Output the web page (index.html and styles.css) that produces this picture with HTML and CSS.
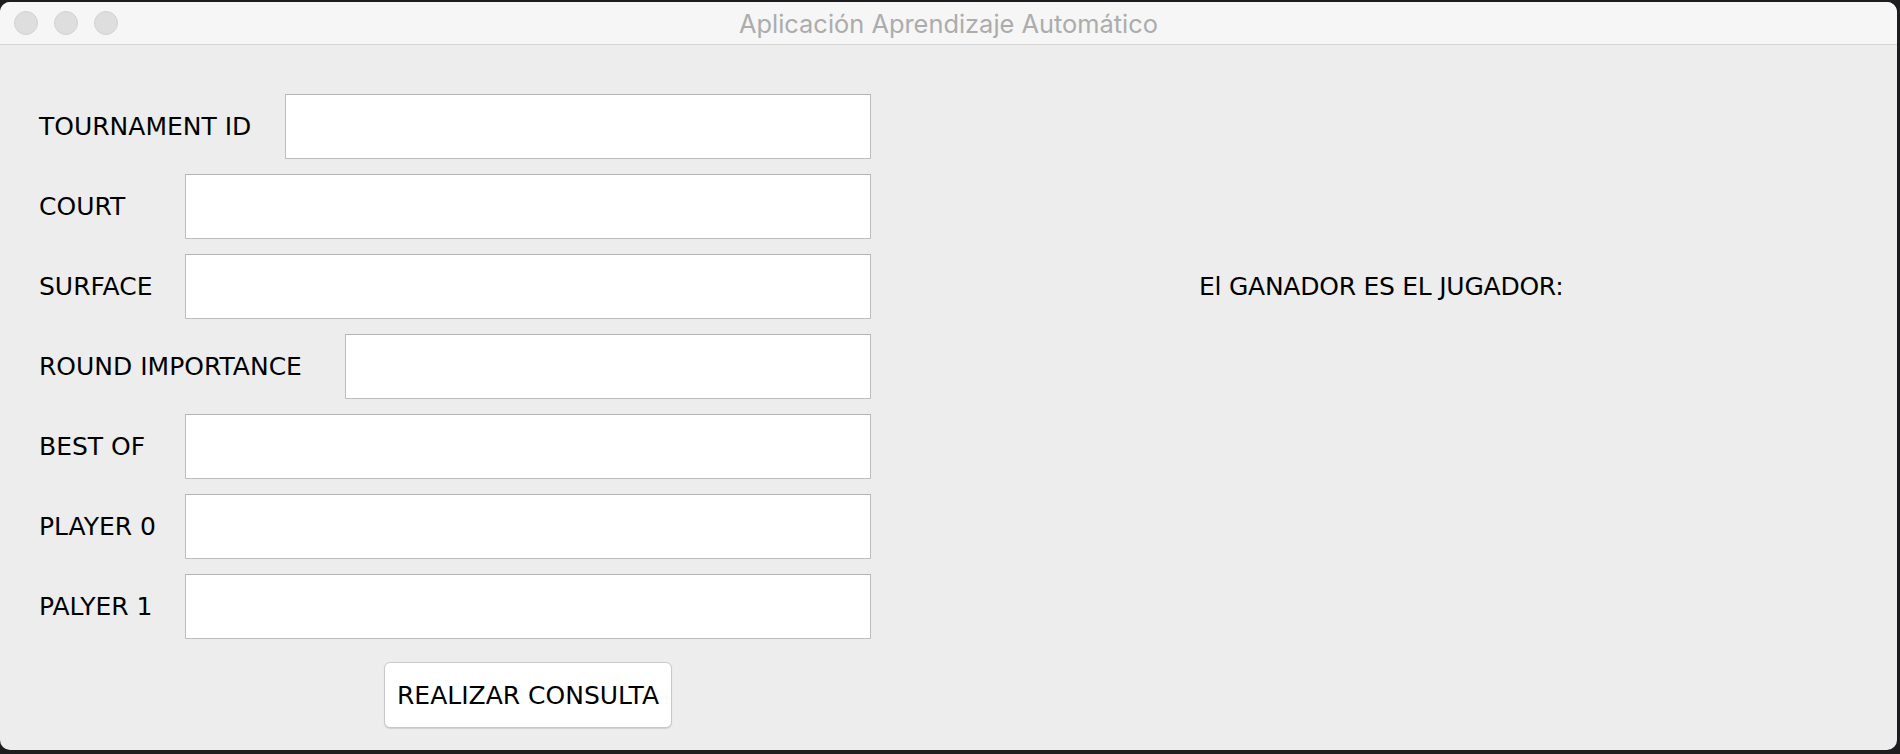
FILE: index.html
```html
<!DOCTYPE html>
<html lang="es">
<head>
<meta charset="utf-8">
<title>Aplicación Aprendizaje Automático</title>
<link rel="stylesheet" href="styles.css">
</head>
<body>
<div class="window">
  <div class="titlebar">
    <div class="lights">
      <span class="light"></span>
      <span class="light"></span>
      <span class="light"></span>
    </div>
    <div class="title">Aplicación Aprendizaje Automático</div>
  </div>
  <div class="content">
    <div class="form">
      <div class="row"><label class="lbl lbl-tid">TOURNAMENT ID</label><input class="field" type="text"></div>
      <div class="row"><label class="lbl">COURT</label><input class="field" type="text"></div>
      <div class="row"><label class="lbl">SURFACE</label><input class="field" type="text"></div>
      <div class="row"><label class="lbl lbl-round">ROUND IMPORTANCE</label><input class="field" type="text"></div>
      <div class="row"><label class="lbl">BEST OF</label><input class="field" type="text"></div>
      <div class="row"><label class="lbl">PLAYER 0</label><input class="field" type="text"></div>
      <div class="row"><label class="lbl">PALYER 1</label><input class="field" type="text"></div>
      <div class="actions"><button class="btn" type="button">REALIZAR CONSULTA</button></div>
    </div>
    <div class="result">
      <div class="result-line">El GANADOR ES EL JUGADOR:</div>
    </div>
  </div>
</div>
</body>
</html>
```
FILE: styles.css
```css
html, body {
  margin: 0;
  padding: 0;
}
body {
  background: #1d1d1f;
  width: 1900px;
  height: 754px;
  overflow: hidden;
}
.window {
  margin-top: 2px;
  width: 1897px;
  height: 748px;
  background: #ededed;
  border-radius: 10px;
  overflow: hidden;
  display: flex;
  flex-direction: column;
}
.titlebar {
  height: 42px;
  flex: none;
  background: #f6f6f6;
  border-bottom: 1px solid #d6d6d6;
  display: flex;
  align-items: center;
  position: relative;
}
.lights {
  display: flex;
  gap: 16px;
  padding-left: 14px;
}
.light {
  width: 22px;
  height: 22px;
  border-radius: 50%;
  background: #dedede;
  border: 1px solid #d2d2d2;
}
.title {
  position: absolute;
  left: 0;
  right: 0;
  top: 0;
  bottom: 0;
  display: flex;
  align-items: center;
  justify-content: center;
  font-family: Inter, "Liberation Sans", sans-serif;
  font-size: 25.4px;
  color: #acacac;
}
.content {
  flex: 1;
  display: flex;
  padding: 49px 0 0 39px;
  font-family: "DejaVu Sans", sans-serif;
  font-size: 25px;
  color: #000;
}
.form {
  width: 832px;
  display: flex;
  flex-direction: column;
  gap: 15px;
}
.row {
  display: flex;
  align-items: center;
  height: 65px;
}
.lbl {
  flex: none;
  width: 146px;
  white-space: nowrap;
}
.lbl-tid {
  width: 246px;
}
.lbl-round {
  width: 306px;
}
.field {
  flex: 1;
  height: 65px;
  box-sizing: border-box;
  margin: 0;
  border: 1px solid #bdbdbd;
  border-top-color: #b4b4b4;
  background: #fff;
  outline: none;
  font: inherit;
}
.actions {
  display: flex;
  justify-content: center;
  padding-left: 146px;
  margin-top: 8px;
}
.btn {
  width: 288px;
  height: 66px;
  border: 1px solid #c9c9c9;
  border-radius: 6px;
  background: #fff;
  box-shadow: 0 1px 1px rgba(0,0,0,0.12);
  font-family: "DejaVu Sans", sans-serif;
  font-size: 25px;
  color: #000;
  padding: 0;
}
.result {
  padding-top: 160px;
  margin-left: 328px;
}
.result-line {
  height: 65px;
  display: flex;
  align-items: center;
  white-space: nowrap;
  letter-spacing: -0.25px;
}
```
